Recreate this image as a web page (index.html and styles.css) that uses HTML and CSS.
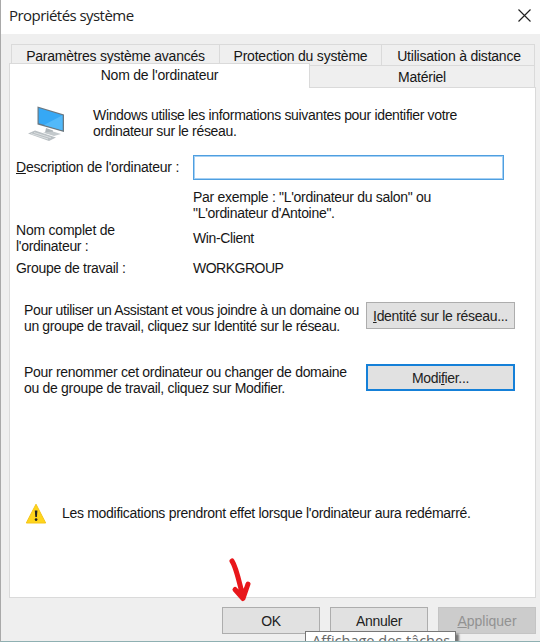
FILE: index.html
```
<!DOCTYPE html>
<html lang="fr">
<head>
<meta charset="utf-8">
<title>Propriétés système</title>
<link rel="stylesheet" href="styles.css">
</head>
<body>
<div class="window">
  <header class="titlebar">
    <span class="title">Propriétés système</span>
    <svg class="close" width="13" height="13" viewBox="0 0 13 13"><path d="M.5 .5 12.5 12.5M12.5 .5 .5 12.5" stroke="#222" stroke-width="1.15" fill="none"/></svg>
  </header>
  <main class="sheet">
    <nav class="tabs">
      <div class="tab-row upper">
        <div class="tab">Paramètres système avancés</div>
        <div class="tab">Protection du système</div>
        <div class="tab remote">Utilisation à distance</div>
      </div>
      <div class="tab-row lower">
        <div class="tab active">Nom de l'ordinateur</div>
        <div class="tab">Matériel</div>
      </div>
    </nav>
    <section class="panel">
      <div class="intro">
        <svg class="pc" width="38" height="36" viewBox="0 0 38 36">
          <path d="M18 22 25 24.500 25 28 17 27Z" fill="#aeb5b9"/>
          <path d="M15 26.500 26 30 33 28 25 25.500Z" fill="#c3c9cc"/>
          <path d="M9.500 .5 36 8.500V26L9.500 18.500Z" fill="#6c7880"/>
          <path d="M10.700 2 34.500 9.300V24.300L10.700 17.300Z" fill="#36a8f5"/>
          <path d="M34.500 9.300V24.300L16 18.900Z" fill="#52b9fa"/>
          <path d="M0 27.500 7 24.500 28 31.500 21 35Z" fill="#b9bfc3"/>
          <path d="M3 27.600 20 33M6 26.500 23 31.800" stroke="#e5e8e9" stroke-width=".8"/>
        </svg>
        <p class="tight"><span>Windows utilise les informations suivantes pour identifier votre</span><span>ordinateur sur le réseau.</span></p>
      </div>
      <div class="field">
        <label for="desc"><u>D</u>escription de l'ordinateur :</label>
        <input id="desc" type="text">
      </div>
      <p class="example snug"><span>Par exemple : "L'ordinateur du salon" ou</span><span>"L'ordinateur d'Antoine".</span></p>
      <div class="info full">
        <p><span>Nom complet de</span><span class="snug">l'ordinateur :</span></p>
        <p class="tighter"><span>Win-Client</span></p>
      </div>
      <div class="info group snug">
        <p><span>Groupe de travail :</span></p>
        <p class="wide"><span>WORKGROUP</span></p>
      </div>
      <div class="action join">
        <p class="tighter"><span>Pour utiliser un Assistant et vous joindre à un domaine ou</span><span>un groupe de travail, cliquez sur Identité sur le réseau.</span></p>
        <button class="snug"><u>I</u>dentité sur le réseau...</button>
      </div>
      <div class="action rename snug">
        <p><span>Pour renommer cet ordinateur ou changer de domaine</span><span>ou de groupe de travail, cliquez sur Modifier.</span></p>
        <button class="focused tight">Modi<u>f</u>ier...</button>
      </div>
      <div class="warning snug">
        <svg width="22" height="21" viewBox="0 0 22 21"><path d="M11 1.200 20.700 20H1.300Z" fill="#ffd51c" stroke="#f5c518" stroke-width="1" stroke-linejoin="round"/><path d="M9.800 7.500h2.600l-.5 6.500h-1.600z" fill="#222"/><circle cx="11.100" cy="16.600" r="1.350" fill="#222"/></svg>
        <p><span>Les modifications prendront effet lorsque l'ordinateur aura redémarré.</span></p>
      </div>
    </section>
  </main>
  <footer class="buttons">
    <button>OK</button>
    <button>Annuler</button>
    <button class="disabled"><u>A</u>ppliquer</button>
  </footer>
  <svg class="arrow" width="28" height="50" viewBox="0 0 28 50"><path d="M7 6C11 12 13 22 17 38M10 34.500 18 43.500 23 29" fill="none" stroke="#e8171b" stroke-width="5" stroke-linecap="round" stroke-linejoin="round"/><path d="M10 34.500 18 43.500 23 29 17 35Z" fill="#e8171b"/></svg>
  <div class="tooltip"><span>Affichage des tâches</span></div>
</div>
</body>
</html>
```
FILE: styles.css
```
* { box-sizing: border-box; }
body { margin: 0; overflow: hidden; background: #efefef; }
p { margin: 0; }
p span { display: block; width: max-content; }
.window {
  position: relative;
  width: 540px;
  height: 642px;
  overflow: hidden;
  background: #efefef;
  border-left: 1px solid #a9a9a9;
  border-bottom: 1px solid #8fb0b2;
  font: 14px/16px "Liberation Sans", Arial, sans-serif;
  letter-spacing: -.22px;
  color: #161616;
  display: flex;
  flex-direction: column;
}
.snug { letter-spacing: -.3px; }
.tight { letter-spacing: -.33px; }
.tighter { letter-spacing: -.37px; }
.wide { letter-spacing: -.5px; }
.titlebar {
  height: 34px;
  flex: none;
  background: #fff;
  display: flex;
  justify-content: space-between;
  padding: 5px 9px 0 8px;
}
.title { font: 15px/21px "Open Sans", "Noto Sans", sans-serif; color: #222; white-space: nowrap; letter-spacing: -.55px; }
.close { margin-top: 4px; }
.sheet { margin: 10px 4px 0 8px; height: 554px; flex: none; }
.tabs { height: 43px; }
.tab-row { display: grid; }
.upper { grid-template-columns: 209px 162px 1fr; margin: 0 1px 0 2px; height: 21px; }
.lower { grid-template-columns: 301px 1fr; height: 22px; }
.tab {
  display: flex;
  justify-content: center;
  padding-top: 3px;
  border: 1px solid #dadada;
  border-width: 1px 1px 0 0;
  white-space: nowrap;
}
.upper .tab:first-child { border-left-width: 1px; }
.upper .remote { padding-left: 2px; }
.lower .tab { margin-right: 1px; }
.lower .tab.active {
  background: #fff;
  margin: -2px 0 -1px;
  border-left-width: 1px;
  position: relative;
}
.panel { height: 511px; background: #fff; border: 1px solid #dadada; }
.intro { display: flex; padding: 19px 0 0 18px; height: 66px; }
.pc { flex: none; margin: -1px 27px 0 0; }
.field { display: flex; align-items: center; height: 26px; padding-left: 6px; }
.field label { width: 177px; flex: none; white-space: nowrap; letter-spacing: -.24px; }
.field input {
  appearance: none;
  width: 311px;
  height: 25px;
  border: 1px solid #4f9fe0;
  box-shadow: inset 0 0 0 1px #a5d0f4;
  background: #fff;
  outline: none;
  padding: 0 4px;
}
.example { padding: 9px 0 0 183px; height: 42px; }
.info { display: grid; grid-template-columns: 177px 1fr; align-items: center; padding-left: 6px; }
.full { height: 32px; }
.group { margin-top: 6px; height: 16px; }
.action { display: flex; justify-content: space-between; height: 32px; padding: 0 20px 0 14px; }
.join { margin-top: 26px; }
.rename { margin-top: 30px; }
button {
  font: inherit;
  letter-spacing: -.3px;
  color: #222;
  background: #e1e1e1;
  border: 1px solid #adadad;
  height: 27px;
  padding: 0;
  flex: none;
  white-space: nowrap;
}
.action button { width: 149px; }
button.focused { border: 2px solid #1580d8; }
.warning { display: flex; align-items: center; margin-top: 106px; height: 22px; padding-left: 15px; }
.warning svg { margin-right: 15px; flex: none; }
.buttons { display: grid; grid-template-columns: repeat(3, 98px); gap: 10px; padding: 9px 0 0 221px; }
.buttons button.disabled { background: #ccc; border-color: #c4c4c4; color: #929292; letter-spacing: 0; }
.arrow { position: absolute; left: 224px; top: 555px; }
.tooltip {
  position: absolute;
  left: 304px;
  top: 631px;
  width: 151px;
  height: 20px;
  background: #fff;
  border: 1px solid #777;
  box-shadow: 3px 3px 2px #777;
  padding: 0 0 0 6px;
  font: 14.5px/17px "Open Sans", sans-serif;
  letter-spacing: 0;
  color: #666;
  white-space: nowrap;
}
```
